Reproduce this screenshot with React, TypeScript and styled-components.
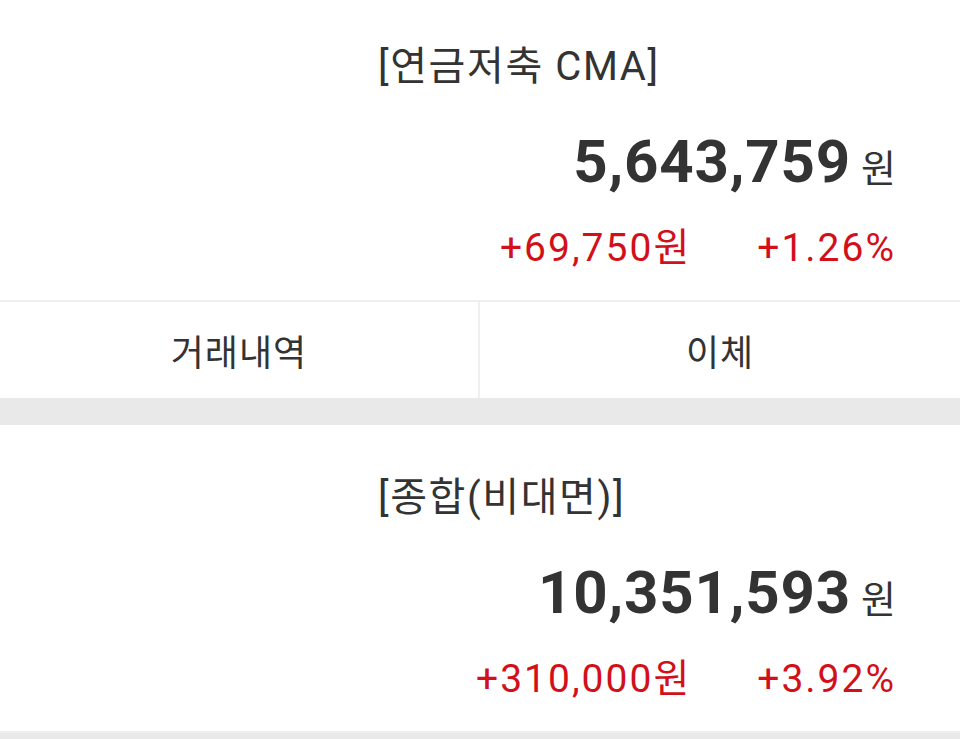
import React from "react";
import styled, { createGlobalStyle } from "styled-components";

const GlobalStyle = createGlobalStyle`
  html, body {
    margin: 0;
    padding: 0;
    background: #ffffff;
  }
  body {
    font-family: Roboto, "Noto Sans CJK KR", sans-serif;
    color: #333333;
    overflow: hidden;
  }
`;

const accounts = [
  {
    name: "[연금저축 CMA]",
    balance: "5,643,759",
    profit: "+69,750원",
    rate: "+1.26%",
  },
  {
    name: "[종합(비대면)]",
    balance: "10,351,593",
    profit: "+310,000원",
    rate: "+3.92%",
  },
];

const Page = styled.div`
  width: 960px;
  height: 739px;
  overflow: hidden;
  background: #fff;
`;

const Card = styled.section<{ $first?: boolean }>`
  margin-top: ${(p) => (p.$first ? "-6px" : "0")};
  background: #fff;
`;

const Summary = styled.div`
  padding: 48px 64px 0 378px;
  height: 308px;
  box-sizing: border-box;
  border-bottom: 2px solid #efefef;
`;

const Title = styled.h2`
  margin: 0;
  font-family: Roboto, "Noto Sans CJK KR", sans-serif;
  font-weight: 400;
  font-size: 40px;
  line-height: 50px;
  letter-spacing: 1.6px;
  color: #333;
`;

const BalanceRow = styled.div`
  display: flex;
  justify-content: flex-end;
  align-items: baseline;
  gap: 10px;
  margin-top: 35px;
  height: 70px;
`;

const Balance = styled.span`
  font-family: Roboto, sans-serif;
  font-weight: 700;
  font-size: 60px;
  line-height: 70px;
  letter-spacing: 0.8px;
  color: #333;
`;

const Unit = styled.span`
  font-family: "Noto Sans CJK KR", sans-serif;
  font-size: 38px;
  line-height: 38px;
  color: #333;
`;

const ChangeRow = styled.div`
  display: flex;
  justify-content: flex-end;
  align-items: baseline;
  gap: 66px;
  margin-top: 28px;
`;

const Change = styled.span`
  font-family: Roboto, "Noto Sans CJK KR", sans-serif;
  font-size: 39px;
  line-height: 46px;
  letter-spacing: 2px;
  color: #d2101a;
`;

const Actions = styled.div`
  display: grid;
  grid-template-columns: 478px 1fr;
  height: 96px;
`;

const ActionButton = styled.button`
  border: 0;
  background: #fff;
  font-family: "Noto Sans CJK KR", sans-serif;
  font-size: 36px;
  letter-spacing: 1px;
  color: #333;
  padding: 0;
  & + & {
    border-left: 2px solid #efefef;
  }
`;

const Gap = styled.div`
  height: 27px;
  background: #e9e9e9;
`;

export default function App() {
  return (
    <Page>
      <GlobalStyle />
      {accounts.map((a, i) => (
        <Card key={a.name} $first={i === 0}>
          <Summary>
            <Title>{a.name}</Title>
            <BalanceRow>
              <Balance>{a.balance}</Balance>
              <Unit>원</Unit>
            </BalanceRow>
            <ChangeRow>
              <Change>{a.profit}</Change>
              <Change>{a.rate}</Change>
            </ChangeRow>
          </Summary>
          {i === 0 ? (
            <>
              <Actions>
                <ActionButton>거래내역</ActionButton>
                <ActionButton>이체</ActionButton>
              </Actions>
              <Gap />
            </>
          ) : (
            <Gap />
          )}
        </Card>
      ))}
    </Page>
  );
}
